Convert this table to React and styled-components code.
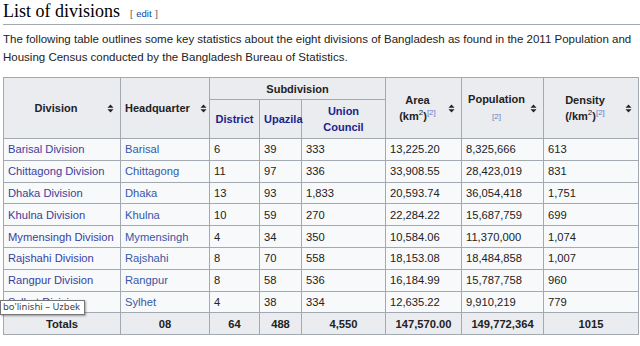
import React from "react";
import styled, { createGlobalStyle } from "styled-components";

const Global = createGlobalStyle`
  html, body { margin: 0; padding: 0; background: #fff; }
  body { font-family: "Liberation Sans", Arial, sans-serif; color: #222; }
`;

const Page = styled.div`
  padding: 0 2px 0 3px;
  position: relative;
  width: 635px;
`;

const Heading = styled.h2`
  margin: 0 -2px 0 0;
  padding: 0 0 1px;
  height: 25px;
  box-sizing: border-box;
  font-family: "Liberation Serif", "Times New Roman", serif;
  font-weight: normal;
  font-size: 18px;
  line-height: 22px;
  color: #000;
  border-bottom: 1px solid #a2a9b1;
  display: flex;
  align-items: baseline;
  gap: 10px;
`;

const EditLink = styled.span`
  font-family: "Liberation Sans", Arial, sans-serif;
  font-size: 9.5px;
  color: #54595d;
  word-spacing: 1px;
  a { color: #0645ad; text-decoration: none; }
`;

const Para = styled.p`
  margin: 5px 0 11px;
  font-size: 11.5px;
  line-height: 18px;
  color: #222;
`;

const Table = styled.table`
  border-collapse: collapse;
  table-layout: fixed;
  width: 635px;
  font-size: 11.2px;
  background: #f8f9fa;
  border: 1px solid #a2a9b1;
`;

const Th = styled.th`
  background: #eaecf0;
  border: 1px solid #a2a9b1;
  font-weight: bold;
  font-size: 11px;
  line-height: 16px;
  padding: ${(p) => (p.$tall ? "3px 4px" : "2px 4px")};
  padding-right: ${(p) => p.$pr || "4px"};
  height: ${(p) => p.$h || "auto"};
  text-align: center;
  vertical-align: middle;
  color: #222;
`;

const Td = styled.td`
  border: 1px solid #a2a9b1;
  padding: 0 4px;
  height: 20.8px;
  line-height: 14px;
  text-align: ${(p) => (p.$center ? "center" : "left")};
  font-weight: ${(p) => (p.$bold ? "bold" : "normal")};
  background: ${(p) => (p.$bold ? "#eaecf0" : "transparent")};
  color: #222;
  white-space: nowrap;
`;

const Link = styled.a`
  color: ${(p) => (p.$visited ? "#3a3f9e" : "#3558a8")};
  text-decoration: none;
`;

const HeadLink = styled.a`
  color: #1a1f8c;
  text-decoration: none;
`;

const Sortable = styled.div`
  display: flex;
  align-items: center;
  justify-content: space-between;
  gap: 3px;
`;

const SortText = styled.span`
  flex: 1;
  text-align: ${(p) => (p.$left ? "left" : "center")};
`;

const Sup = styled.sup`
  font-size: 8px;
  line-height: 0;
  font-weight: normal;
  color: ${(p) => (p.$ref ? "#6b7bc6" : "inherit")};
`;

const RefLine = styled.span`
  font-size: 8px;
  font-weight: normal;
  color: #6b7bc6;
`;

const Tooltip = styled.div`
  position: absolute;
  left: 0;
  top: 300px;
  background: #fff;
  border: 1px solid #767676;
  box-shadow: 1px 1px 2px rgba(0, 0, 0, 0.35);
  font-family: "Noto Sans", "Liberation Sans", sans-serif;
  font-size: 9.5px;
  line-height: 12px;
  padding: 0 4px 1px 2px;
  color: #444;
  white-space: nowrap;
`;

const SortIcon = () => (
  <svg width="7" height="9" viewBox="0 0 7 9" style={{ flex: "none" }}>
    <path d="M3.5 0.5 L6.5 3.8 H0.5 Z" fill="#222" />
    <path d="M3.5 8.5 L6.5 5.2 H0.5 Z" fill="#222" />
  </svg>
);

const rows = [
  ["Barisal Division", "Barisal", "6", "39", "333", "13,225.20", "8,325,666", "613"],
  ["Chittagong Division", "Chittagong", "11", "97", "336", "33,908.55", "28,423,019", "831"],
  ["Dhaka Division", "Dhaka", "13", "93", "1,833", "20,593.74", "36,054,418", "1,751"],
  ["Khulna Division", "Khulna", "10", "59", "270", "22,284.22", "15,687,759", "699"],
  ["Mymensingh Division", "Mymensingh", "4", "34", "350", "10,584.06", "11,370,000", "1,074"],
  ["Rajshahi Division", "Rajshahi", "8", "70", "558", "18,153.08", "18,484,858", "1,007"],
  ["Rangpur Division", "Rangpur", "8", "58", "536", "16,184.99", "15,787,758", "960"],
  ["Sylhet Division", "Sylhet", "4", "38", "334", "12,635.22", "9,910,219", "779"],
];

const widths = [117, 89, 50, 42, 84, 76, 82, 95];

export default function App() {
  return (
    <Page>
      <Global />
      <Heading>
        List of divisions
        <EditLink>
          [ <a href="#">edit</a> ]
        </EditLink>
      </Heading>
      <Para>
        The following table outlines some key statistics about the eight divisions of Bangladesh as found in the
        2011 Population and Housing Census conducted by the Bangladesh Bureau of Statistics.
      </Para>
      <Table>
        <colgroup>
          {widths.map((w, i) => (
            <col key={i} style={{ width: w }} />
          ))}
        </colgroup>
        <thead>
          <tr>
            <Th rowSpan={2} $pr="6px">
              <Sortable>
                <SortText>Division</SortText>
                <SortIcon />
              </Sortable>
            </Th>
            <Th rowSpan={2} $pr="2px">
              <Sortable>
                <SortText $left>Headquarter</SortText>
                <SortIcon />
              </Sortable>
            </Th>
            <Th colSpan={3} $h="17px">Subdivision</Th>
            <Th rowSpan={2} $pr="6px">
              <Sortable>
                <SortText>
                  Area
                  <br />
                  (km<Sup>2</Sup>)<Sup $ref>[2]</Sup>
                </SortText>
                <SortIcon />
              </Sortable>
            </Th>
            <Th rowSpan={2} $pr="6px">
              <Sortable>
                <SortText>
                  Population
                  <br />
                  <RefLine>[2]</RefLine>
                </SortText>
                <SortIcon />
              </Sortable>
            </Th>
            <Th rowSpan={2} $pr="6px">
              <Sortable>
                <SortText>
                  Density
                  <br />
                  (/km<Sup>2</Sup>)<Sup $ref>[2]</Sup>
                </SortText>
                <SortIcon />
              </Sortable>
            </Th>
          </tr>
          <tr>
            <Th $tall $h="32px">
              <HeadLink href="#">District</HeadLink>
            </Th>
            <Th $tall>
              <HeadLink href="#">Upazila</HeadLink>
            </Th>
            <Th $tall>
              <HeadLink href="#">
                Union
                <br />
                Council
              </HeadLink>
            </Th>
          </tr>
        </thead>
        <tbody>
          {rows.map((r) => (
            <tr key={r[0]}>
              <Td>
                <Link href="#" $visited>
                  {r[0]}
                </Link>
              </Td>
              <Td>
                <Link href="#">{r[1]}</Link>
              </Td>
              {r.slice(2).map((v, i) => (
                <Td key={i}>{v}</Td>
              ))}
            </tr>
          ))}
          <tr>
            <Td $bold $center>Totals</Td>
            <Td $bold $center>08</Td>
            <Td $bold $center>64</Td>
            <Td $bold $center>488</Td>
            <Td $bold $center>4,550</Td>
            <Td $bold $center>147,570.00</Td>
            <Td $bold $center>149,772,364</Td>
            <Td $bold $center>1015</Td>
          </tr>
        </tbody>
      </Table>
      <Tooltip>bo'linishi – Uzbek</Tooltip>
    </Page>
  );
}
